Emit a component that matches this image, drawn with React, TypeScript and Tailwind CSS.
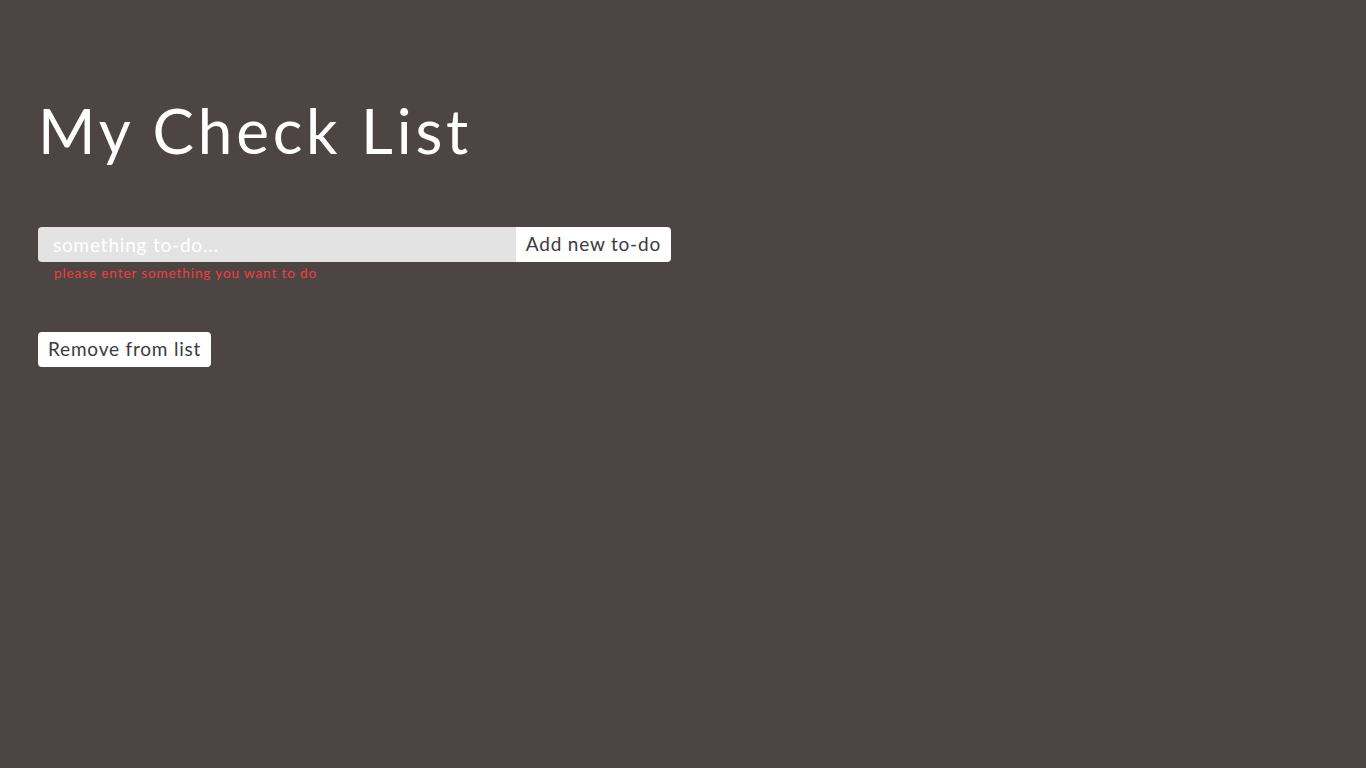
import { useState } from 'react';

function App() {
  const [text, setText] = useState('');

  return (
    <div className="min-h-screen bg-[#4d4544] px-[38px] pt-[92px] font-['Lato','Noto_Sans',sans-serif]">
      <h1 className="text-[62px] leading-[76px] font-normal tracking-[3.8px] text-white">My Check List</h1>
      <form className="mt-[59px] flex w-[633px]" onSubmit={(e) => e.preventDefault()}>
        <input
          value={text}
          onChange={(e) => setText(e.target.value)}
          placeholder="something to-do..."
          className="h-[35px] flex-1 rounded-l-[4px] bg-[#e3e3e3] px-[15px] text-[19px] tracking-[0.8px] text-[#333] outline-none placeholder:text-white"
        />
        <button className="h-[35px] rounded-r-[4px] bg-white px-[10px] text-[19px] tracking-[0.8px] text-[#3d3a42]">
          Add new to-do
        </button>
      </form>
      <p className="mt-[1px] pl-[16px] text-[13.5px] leading-[20px] tracking-[0.9px] text-[#f03e3e]">please enter something you want to do</p>
      <button className="mt-[49px] h-[35px] rounded-[4px] bg-white px-[10px] text-[19px] tracking-[0.8px] text-[#3d3a42]">
        Remove from list
      </button>
    </div>
  );
}

export default App;
